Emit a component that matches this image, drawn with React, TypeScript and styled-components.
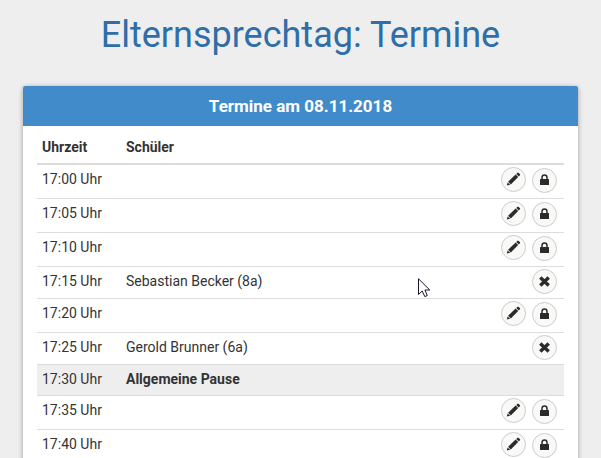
import React from "react";
import styled, { createGlobalStyle } from "styled-components";

const GlobalStyle = createGlobalStyle`
  html, body { margin: 0; background: #eee; }
  body {
    overflow: hidden;
    font-family: Roboto, "Liberation Sans", sans-serif;
    font-size: 14px;
    line-height: 20px;
    color: #333;
  }
`;

const Page = styled.main`
  padding: 14px 23px 0;
`;

const Title = styled.h1`
  margin: 0 0 30px;
  font-size: 36px;
  line-height: 42px;
  font-weight: 400;
  text-align: center;
  color: #2f6ea8;
`;

const Panel = styled.section`
  position: relative;
  background: #fff;
  border-radius: 2px;
  box-shadow: 0 1px 5px rgba(0, 0, 0, 0.35);
`;

const PanelHeading = styled.h2`
  margin: 0;
  padding: 10px 15px;
  font-size: 17px;
  line-height: 20px;
  font-weight: 700;
  text-align: center;
  color: #fff;
  background: #428bca;
  border-radius: 2px 2px 0 0;
`;

const PanelBody = styled.div`
  padding: 6px 14px 14px;
`;

const Table = styled.table`
  width: 100%;
  table-layout: fixed;
  border-collapse: separate;
  border-spacing: 0;
`;

const TimeColumn = styled.col`
  width: 84px;
`;

const ActionColumn = styled.col`
  width: 70px;
`;

const HeadCell = styled.th`
  padding: 5px 5px 6px;
  text-align: left;
  font-weight: 700;
  border-bottom: 2px solid #ddd;
`;

const Row = styled.tr<{ $pause?: boolean }>`
  background: ${(p) => (p.$pause ? "#eee" : "#fff")};
`;

const Cell = styled.td<{ $strong?: boolean }>`
  padding: 4px 5px 6px;
  vertical-align: top;
  font-weight: ${(p) => (p.$strong ? 700 : 400)};
  border-bottom: 1px solid #ddd;
`;

const ActionCell = styled(Cell)`
  padding: 2px 7px 4px 0;
`;

const Actions = styled.div`
  display: flex;
  justify-content: flex-end;
  align-items: flex-start;
  gap: 6px;
`;

const RoundButton = styled.button<{ $lowered?: boolean }>`
  display: flex;
  align-items: center;
  justify-content: center;
  box-sizing: border-box;
  width: 25px;
  height: 25px;
  margin: ${(p) => (p.$lowered ? "1px 0" : "0")};
  padding: 0;
  border: 1px solid #ccc;
  border-radius: 50%;
  background: #f9f9f8;
  color: #2b2b2b;
  cursor: pointer;
`;

const Pointer = styled.svg`
  position: absolute;
  top: 192px;
  left: 395px;
  pointer-events: none;
`;

const PencilIcon = () => (
  <svg width="15" height="15" viewBox="0 0 15 15" fill="currentColor" aria-hidden="true">
    <path d="M0.8 13.6 L1.6 10.4 L4.2 12.8Z" />
    <path d="M2.1 9.8 L9.6 2.5 L12.2 5 L4.8 12.4Z" />
    <path d="M10.2 1.9 L11.3 0.9 Q12 0.3 12.6 0.9 L13.9 2.1 Q14.5 2.7 13.9 3.3 L12.8 4.4Z" />
  </svg>
);

const LockIcon = () => (
  <svg width="9" height="13" viewBox="0 0 9 13" fill="currentColor" aria-hidden="true">
    <path d="M0.6 5 H8.4 Q9 5 9 5.6 V10.4 Q9 11 8.4 11 H0.6 Q0 11 0 10.4 V5.6 Q0 5 0.6 5Z" />
    <path d="M2 5.5 V3.6 C2 0 7 0 7 3.6 V5.5" fill="none" stroke="currentColor" strokeWidth="1.5" />
  </svg>
);

const RemoveIcon = () => (
  <svg width="11" height="11" viewBox="0 0 11 11" aria-hidden="true">
    <path d="M1.3 1.5 L9.7 9.5 M9.7 1.5 L1.3 9.5" stroke="currentColor" strokeWidth="3.4" />
  </svg>
);

type Slot = { time: string; name?: string; kind: "free" | "booked" | "pause" };

const slots: Slot[] = [
  { time: "17:00", kind: "free" },
  { time: "17:05", kind: "free" },
  { time: "17:10", kind: "free" },
  { time: "17:15", name: "Sebastian Becker (8a)", kind: "booked" },
  { time: "17:20", kind: "free" },
  { time: "17:25", name: "Gerold Brunner (6a)", kind: "booked" },
  { time: "17:30", name: "Allgemeine Pause", kind: "pause" },
  { time: "17:35", kind: "free" },
  { time: "17:40", kind: "free" },
];

const SlotActions = ({ slot }: { slot: Slot }) => {
  if (slot.kind === "pause") return null;
  if (slot.kind === "booked") {
    return (
      <Actions>
        <RoundButton type="button" aria-label={`${slot.time} Uhr absagen`}>
          <RemoveIcon />
        </RoundButton>
      </Actions>
    );
  }
  return (
    <Actions>
      <RoundButton type="button" aria-label={`${slot.time} Uhr bearbeiten`}>
        <PencilIcon />
      </RoundButton>
      <RoundButton type="button" $lowered aria-label={`${slot.time} Uhr sperren`}>
        <LockIcon />
      </RoundButton>
    </Actions>
  );
};

export default function App() {
  return (
    <>
      <GlobalStyle />
      <Page>
        <Title>Elternsprechtag: Termine</Title>
        <Panel>
          <PanelHeading>Termine am 08.11.2018</PanelHeading>
          <PanelBody>
            <Table>
              <colgroup>
                <TimeColumn />
                <col />
                <ActionColumn />
              </colgroup>
              <thead>
                <tr>
                  <HeadCell scope="col">Uhrzeit</HeadCell>
                  <HeadCell scope="col">Schüler</HeadCell>
                  <HeadCell as="td" />
                </tr>
              </thead>
              <tbody>
                {slots.map((slot) => (
                  <Row key={slot.time} $pause={slot.kind === "pause"}>
                    <Cell>{slot.time} Uhr</Cell>
                    <Cell $strong={slot.kind === "pause"}>{slot.name}</Cell>
                    <ActionCell>
                      <SlotActions slot={slot} />
                    </ActionCell>
                  </Row>
                ))}
              </tbody>
            </Table>
          </PanelBody>
          <Pointer width="13" height="20" viewBox="0 0 13 20" aria-hidden="true">
            <path
              d="M0.5 0.8 V16.5 L4.2 13 L6.8 18.6 L9.3 17.5 L6.9 12 H11.8Z"
              fill="#fff"
              stroke="#1c1424"
              strokeWidth="1"
            />
          </Pointer>
        </Panel>
      </Page>
    </>
  );
}
